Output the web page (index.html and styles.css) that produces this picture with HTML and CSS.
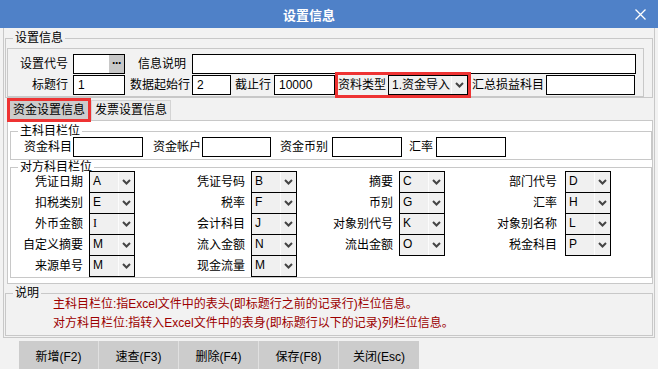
FILE: index.html
```html
<!DOCTYPE html>
<html>
<head>
<meta charset="utf-8">
<link rel="stylesheet" href="styles.css">
</head>
<body>
<div class="titlebar">
  <div class="title">设置信息</div>
  <div class="close"><svg width="11" height="11" viewBox="0 0 11 11"><path d="M0.5 0.5L10.5 10.5M10.5 0.5L0.5 10.5" stroke="#fff" stroke-width="1.3" fill="none"/></svg></div>
</div>
<div class="main">
  <fieldset class="grp g-setup">
    <legend>设置信息</legend>
    <div class="panel">
      <div class="row">
        <span class="lb w60">设置代号</span>
        <div class="inp code"><span class="dots">···</span></div>
        <span class="lb l-desc">信息说明</span>
        <div class="inp desc"></div>
      </div>
      <div class="row r2">
        <span class="lb w60">标题行</span>
        <div class="inp code">1</div>
        <span class="lb l-start">数据起始行</span>
        <div class="inp i-start">2</div>
        <span class="lb l-end">截止行</span>
        <div class="inp i-end">10000</div>
        <div class="mark">
          <span class="lb l-type">资料类型</span>
          <div class="sel s-type"><span class="v">1.资金导入</span><span class="arr"><svg width="9" height="6" viewBox="0 0 9 6"><path d="M1 1L4.5 4.5L8 1" stroke="#444" stroke-width="2" fill="none"/></svg></span></div>
        </div>
        <span class="lb l-sum">汇总损益科目</span>
        <div class="inp i-sum"></div>
      </div>
    </div>
  </fieldset>
  <div class="tabs">
    <div class="tab active">资金设置信息</div>
    <div class="tab">发票设置信息</div>
  </div>
  <div class="tabpage">
    <fieldset class="grp g-main">
      <legend>主科目栏位</legend>
      <div class="row mrow">
        <span class="lb m1">资金科目</span>
        <div class="inp mi1"></div>
        <span class="lb m2">资金帐户</span>
        <div class="inp mi2"></div>
        <span class="lb m3">资金币别</span>
        <div class="inp mi3"></div>
        <span class="lb m4">汇率</span>
        <div class="inp mi4"></div>
      </div>
    </fieldset>
    <fieldset class="grp g-opp">
      <legend>对方科目栏位</legend>
      <div class="ogrid">
        <span class="ol c1">凭证日期</span><div class="sel"><span class="v">A</span><span class="arr"><svg width="9" height="6" viewBox="0 0 9 6"><path d="M1 1L4.5 4.5L8 1" stroke="#444" stroke-width="2" fill="none"/></svg></span></div>
        <span class="ol c2">凭证号码</span><div class="sel"><span class="v">B</span><span class="arr"><svg width="9" height="6" viewBox="0 0 9 6"><path d="M1 1L4.5 4.5L8 1" stroke="#444" stroke-width="2" fill="none"/></svg></span></div>
        <span class="ol c3">摘要</span><div class="sel"><span class="v">C</span><span class="arr"><svg width="9" height="6" viewBox="0 0 9 6"><path d="M1 1L4.5 4.5L8 1" stroke="#444" stroke-width="2" fill="none"/></svg></span></div>
        <span class="ol c4">部门代号</span><div class="sel"><span class="v">D</span><span class="arr"><svg width="9" height="6" viewBox="0 0 9 6"><path d="M1 1L4.5 4.5L8 1" stroke="#444" stroke-width="2" fill="none"/></svg></span></div>

        <span class="ol c1">扣税类别</span><div class="sel"><span class="v">E</span><span class="arr"><svg width="9" height="6" viewBox="0 0 9 6"><path d="M1 1L4.5 4.5L8 1" stroke="#444" stroke-width="2" fill="none"/></svg></span></div>
        <span class="ol c2">税率</span><div class="sel"><span class="v">F</span><span class="arr"><svg width="9" height="6" viewBox="0 0 9 6"><path d="M1 1L4.5 4.5L8 1" stroke="#444" stroke-width="2" fill="none"/></svg></span></div>
        <span class="ol c3">币别</span><div class="sel"><span class="v">G</span><span class="arr"><svg width="9" height="6" viewBox="0 0 9 6"><path d="M1 1L4.5 4.5L8 1" stroke="#444" stroke-width="2" fill="none"/></svg></span></div>
        <span class="ol c4">汇率</span><div class="sel"><span class="v">H</span><span class="arr"><svg width="9" height="6" viewBox="0 0 9 6"><path d="M1 1L4.5 4.5L8 1" stroke="#444" stroke-width="2" fill="none"/></svg></span></div>

        <span class="ol c1">外币金额</span><div class="sel"><span class="v serif">I</span><span class="arr"><svg width="9" height="6" viewBox="0 0 9 6"><path d="M1 1L4.5 4.5L8 1" stroke="#444" stroke-width="2" fill="none"/></svg></span></div>
        <span class="ol c2">会计科目</span><div class="sel"><span class="v">J</span><span class="arr"><svg width="9" height="6" viewBox="0 0 9 6"><path d="M1 1L4.5 4.5L8 1" stroke="#444" stroke-width="2" fill="none"/></svg></span></div>
        <span class="ol c3">对象别代号</span><div class="sel"><span class="v">K</span><span class="arr"><svg width="9" height="6" viewBox="0 0 9 6"><path d="M1 1L4.5 4.5L8 1" stroke="#444" stroke-width="2" fill="none"/></svg></span></div>
        <span class="ol c4">对象别名称</span><div class="sel"><span class="v">L</span><span class="arr"><svg width="9" height="6" viewBox="0 0 9 6"><path d="M1 1L4.5 4.5L8 1" stroke="#444" stroke-width="2" fill="none"/></svg></span></div>

        <span class="ol c1">自定义摘要</span><div class="sel"><span class="v">M</span><span class="arr"><svg width="9" height="6" viewBox="0 0 9 6"><path d="M1 1L4.5 4.5L8 1" stroke="#444" stroke-width="2" fill="none"/></svg></span></div>
        <span class="ol c2">流入金额</span><div class="sel"><span class="v">N</span><span class="arr"><svg width="9" height="6" viewBox="0 0 9 6"><path d="M1 1L4.5 4.5L8 1" stroke="#444" stroke-width="2" fill="none"/></svg></span></div>
        <span class="ol c3">流出金额</span><div class="sel"><span class="v">O</span><span class="arr"><svg width="9" height="6" viewBox="0 0 9 6"><path d="M1 1L4.5 4.5L8 1" stroke="#444" stroke-width="2" fill="none"/></svg></span></div>
        <span class="ol c4">税金科目</span><div class="sel"><span class="v">P</span><span class="arr"><svg width="9" height="6" viewBox="0 0 9 6"><path d="M1 1L4.5 4.5L8 1" stroke="#444" stroke-width="2" fill="none"/></svg></span></div>

        <span class="ol c1">来源单号</span><div class="sel"><span class="v">M</span><span class="arr"><svg width="9" height="6" viewBox="0 0 9 6"><path d="M1 1L4.5 4.5L8 1" stroke="#444" stroke-width="2" fill="none"/></svg></span></div>
        <span class="ol c2">现金流量</span><div class="sel"><span class="v">M</span><span class="arr"><svg width="9" height="6" viewBox="0 0 9 6"><path d="M1 1L4.5 4.5L8 1" stroke="#444" stroke-width="2" fill="none"/></svg></span></div>
      </div>
    </fieldset>
  </div>
  <fieldset class="grp g-note">
    <legend>说明</legend>
    <div class="note">
      <p>主科目栏位:指Excel文件中的表头(即标题行之前的记录行)栏位信息。</p>
      <p>对方科目栏位:指转入Excel文件中的表身(即标题行以下的记录)列栏位信息。</p>
    </div>
  </fieldset>
</div>
<div class="buttons">
  <div class="btn">新增(F2)</div>
  <div class="btn">速查(F3)</div>
  <div class="btn">删除(F4)</div>
  <div class="btn">保存(F8)</div>
  <div class="btn">关闭(Esc)</div>
</div>
</body>
</html>
```

FILE: styles.css
```css
* { box-sizing: border-box; }
html, body { margin: 0; padding: 0; }
body {
  width: 658px; height: 369px; overflow: hidden;
  background: #f2f2f2;
  font-family: "Liberation Sans", "Noto Sans CJK SC", sans-serif;
  font-size: 12px; color: #000;
}
.titlebar { height: 28px; background: #4f81c8; display: flex; align-items: center; }
.title { flex: 1; text-align: center; color: #fff; font-weight: bold; font-size: 13px; padding-right: 9px; }
.close { width: 26px; margin-right: 5px; display: flex; justify-content: center; }
.close svg { display: block; }

.main {
  margin: 0 3px; height: 310px; padding-top: 4px;
  border-left: 1px solid #c8c8c8; border-right: 1px solid #c8c8c8; border-bottom: 1px solid #c8c8c8;
}
.grp { margin: 0; padding: 0; border: 1px solid #c8c8c8; min-width: 0; }
legend { padding: 0 2px; margin-left: 7px; height: 12px; line-height: 12px; }

.g-setup { margin: 0 1px; }
.panel { margin: 4px 8px 0 1px; border: 1px solid #c8c8c8; padding: 5px 0 1px 0; }
.row { display: flex; align-items: center; height: 20px; }
.r2 { margin-top: 1px; }
.lb { white-space: nowrap; line-height: 14px; }
.w60 { width: 60px; text-align: right; }
.inp { height: 20px; border: 1px solid #000; background: #fff; line-height: 18px; padding-left: 4px; }
.code { margin-left: 5px; width: 52px; display: flex; justify-content: flex-end; padding: 0; padding-left: 4px; }
.r2 .code { display: block; }
.dots { width: 15px; background: #c8c8c8; font-weight: bold; text-align: center; line-height: 16px; letter-spacing: -1px; }
.l-desc { margin-left: 13px; width: 48px; }
.desc { margin-left: 6px; width: 444px; }
.l-start { margin-left: 5px; width: 60px; }
.i-start { margin-left: 2px; width: 39px; }
.l-end { margin-left: 4px; width: 36px; }
.i-end { margin-left: 3px; width: 61px; }
.mark { margin-left: 3px; display: flex; align-items: center; height: 20px; outline: 3px solid #ee3333; }
.l-type { width: 48px; }
.s-type { margin-left: 2px; width: 80px; }
.l-sum { margin-left: 4px; width: 72px; }
.i-sum { margin-left: 2px; width: 89px; }

.sel { display: flex; height: 22px; border: 1px solid #000; background: #f0f0f0; }
.sel .v { flex: 1; padding-left: 3px; line-height: 18px; }
.sel .arr { width: 16px; border-left: 1px solid #fcfcfc; display: flex; align-items: center; justify-content: center; }
.sel .arr svg { display: block; }
.serif { font-family: "Liberation Serif", serif; }
.s-type { height: 20px; }

.tabs { display: flex; align-items: flex-end; height: 22px; margin-left: 6px; }
.tab { height: 20px; line-height: 18px; padding: 0 5px; }
.tab.active { width: 78px; height: 18px; margin-bottom: 1px; background: #cccccc; outline: 3px solid #ee3333; text-align: center; padding: 0; line-height: 18px; }
.tab:not(.active) { margin-left: 3px; width: 80px; background: #ebebeb; border: 1px solid #d4d4d4; border-bottom: 0; text-align: center; padding: 0; }

.tabpage { margin: 0 1px 0 3px; height: 164px; background: #fff; border: 1px solid #c8c8c8; padding-top: 4px; }
.g-main { margin: 0 0 0 2px; padding-bottom: 2px; }
.mrow { height: 20px; }
.mrow .inp { height: 20px; }
.m1 { margin-left: 13px; width: 48px; }
.mi1 { margin-left: 1px; width: 70px; }
.m2 { margin-left: 10px; width: 48px; }
.mi2 { margin-left: 1px; width: 69px; }
.m3 { margin-left: 9px; width: 48px; }
.mi3 { margin-left: 4px; width: 70px; }
.m4 { margin-left: 7px; width: 24px; }
.mi4 { margin-left: 3px; width: 70px; }

.g-opp { margin: 1px 0 0 2px; height: 117px; }
.ogrid {
  display: grid; margin-top: -2px;
  grid-template-columns: 78px 46px 116px 46px 102px 46px 120px 46px;
  grid-auto-rows: 21px;
}
.ol { text-align: right; line-height: 22px; white-space: nowrap; }
.c1, .c2, .c3 { padding-right: 6px; }
.c4 { padding-right: 8px; }

.g-note { margin: 3px 1px 1px 1px; height: 49px; }
.note { margin-top: -4px; padding-left: 47px; color: #9c0000; }
.note p { margin: 0; line-height: 19px; }

.buttons { display: flex; margin: 3px 0 0 19px; }
.btn { width: 80px; height: 32px; background: #cccccc; line-height: 32px; text-align: center; border-right: 1px solid #e0e0e0; }
.btn:last-child { border-right: 0; }
```
